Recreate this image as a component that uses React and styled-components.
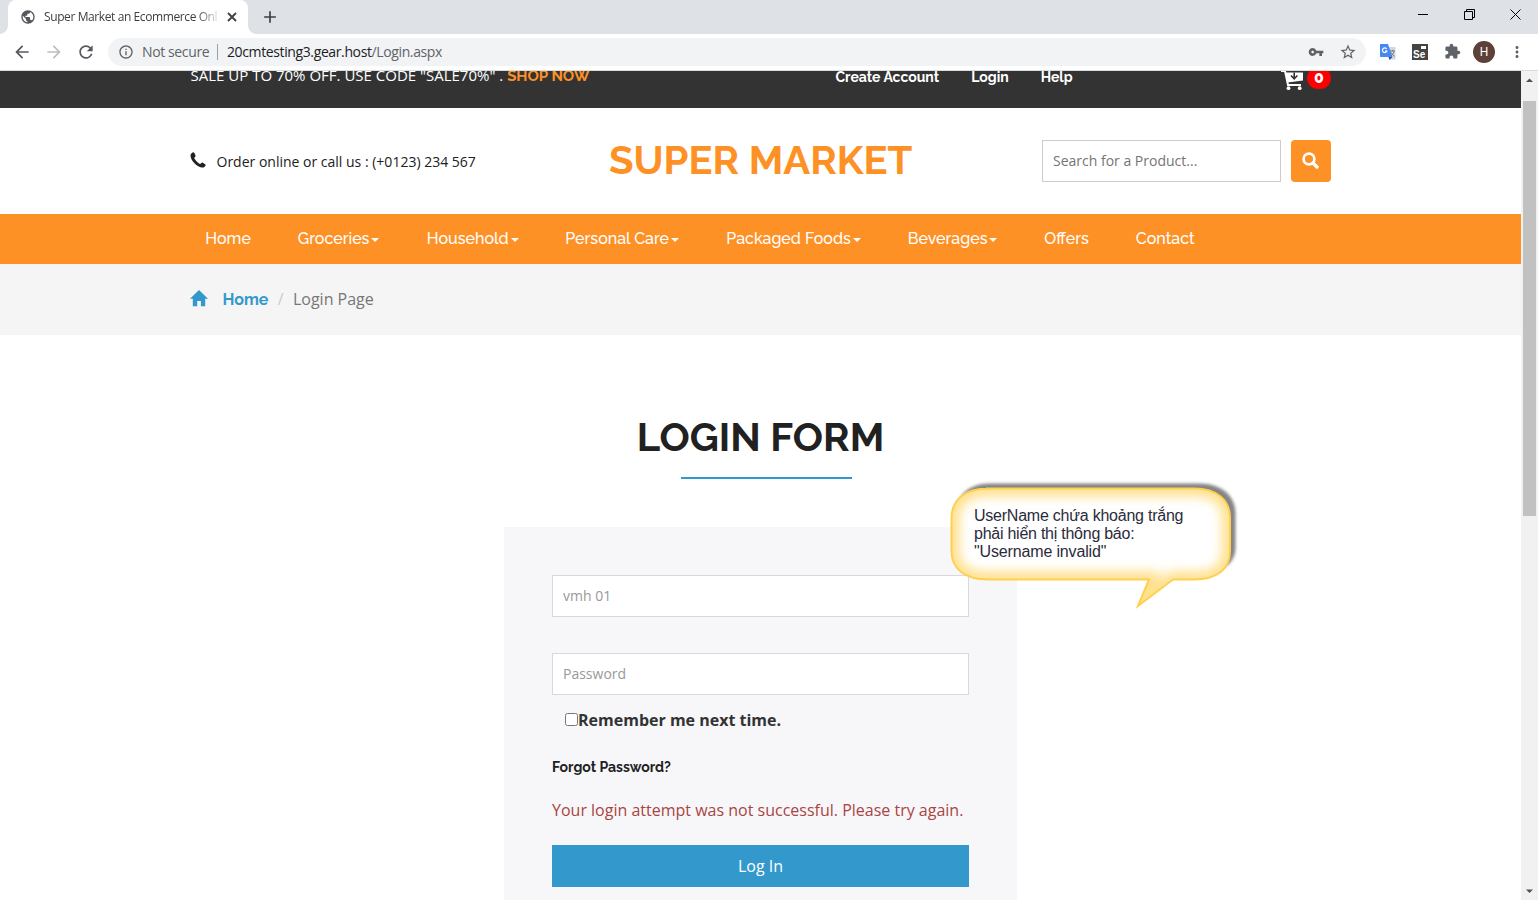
import React from "react";
import styled, { createGlobalStyle, css } from "styled-components";
import {
  MdArrowBack,
  MdArrowForward,
  MdExtension,
  MdInfoOutline,
  MdMoreVert,
  MdRefresh,
  MdStarBorder,
  MdVpnKey,
  MdPublic,
  MdAdd,
} from "react-icons/md";

const raleway = `Raleway, Lato, sans-serif`;
const openSans = `"Open Sans", "Noto Sans", sans-serif`;

const GlobalStyle = createGlobalStyle`
  *, *::before, *::after { box-sizing: border-box; }
  body { margin: 0; overflow: hidden; background: #fff; font-family: ${openSans}; }
  svg { display: block; flex: none; }
  a { text-decoration: none; color: inherit; }
`;

/* ---------- browser window ---------- */

const BrowserWindow = styled.div`
  position: relative;
  display: flex;
  flex-direction: column;
  width: 1538px;
  height: 900px;
  overflow: hidden;
`;

const TabStrip = styled.div`
  display: flex;
  flex: none;
  height: 34px;
  padding-left: 8px;
  background: #dee1e6;
`;

const Tab = styled.div`
  position: relative;
  display: flex;
  align-items: center;
  width: 240px;
  padding: 0 9px 0 12px;
  border-radius: 8px 8px 0 0;
  background: #fff;
  color: #3c4043;

  &::before, &::after {
    content: "";
    position: absolute;
    bottom: 0;
    width: 8px;
    height: 8px;
  }
  &::before { left: -8px; background: radial-gradient(circle at 0 0, transparent 7.5px, #fff 8px); }
  &::after { right: -8px; background: radial-gradient(circle at 100% 0, transparent 7.5px, #fff 8px); }
`;

const TabTitle = styled.span`
  width: 174px;
  margin: 0 7px 0 8px;
  overflow: hidden;
  white-space: nowrap;
  font: 400 12px/16px ${openSans};
  letter-spacing: -0.4px;
  mask-image: linear-gradient(to right, #000 152px, transparent 178px);
`;

const NewTab = styled.div`
  display: flex;
  align-items: center;
  margin-left: 12px;
  color: #3c4043;
`;

const WindowControls = styled.div`
  display: flex;
  gap: 35px;
  margin: 9px 17px 0 auto;
`;

const Toolbar = styled.div`
  display: flex;
  flex: none;
  align-items: center;
  height: 37px;
  padding: 0 12px 1px;
  border-bottom: 1px solid #d9dcdf;
  background: #fff;
  color: #5f6368;
`;

const NavButtons = styled.div`
  display: flex;
  gap: 12px;
  width: 96px;
  color: #54585d;
  & > :nth-child(2) { color: #bcbec1; }
`;

const AddressBar = styled.div`
  display: flex;
  align-items: center;
  width: 1258px;
  height: 28px;
  padding: 0 9px 0 10px;
  border-radius: 14px;
  background: #f1f3f4;
  font: 400 14px/20px ${openSans};
  letter-spacing: -0.38px;
  white-space: nowrap;
`;

const SecurityLabel = styled.span`
  width: 76px;
  margin-left: 8px;
  border-right: 1px solid #9aa0a6;
  line-height: 16px;
`;

const Url = styled.span`
  flex: 1;
  margin-left: 9px;
  color: #5f6368;
  b { font-weight: 400; color: #202124; }
`;

const AddressActions = styled.div`
  display: flex;
  gap: 15px;
  align-items: center;
`;

const Extensions = styled.div`
  display: flex;
  align-items: center;
  margin-left: 14px;
  gap: 16px;
`;

const Avatar = styled.div`
  width: 22px;
  height: 22px;
  margin-left: -4px;
  border-radius: 50%;
  background: #5d4037;
  color: #fff;
  text-align: center;
  font: 400 12px/22px Roboto, sans-serif;
`;

const MenuSlot = styled.div`
  margin-left: -3px;
`;

/* ---------- viewport ---------- */

const Viewport = styled.div`
  display: flex;
  flex: 1;
  min-height: 0;
`;

const Page = styled.main`
  display: flex;
  flex-direction: column;
  width: 1521px;
  overflow: hidden;
  color: #212121;
`;

const Scrollbar = styled.div`
  display: flex;
  flex-direction: column;
  align-items: center;
  width: 17px;
  padding: 7px 0 6px;
  background: #f1f1f1;
`;

const ScrollThumb = styled.div`
  width: 13px;
  height: 415px;
  margin: 18px 0 auto;
  background: #c1c1c1;
`;

const container = css`
  width: 1141px;
  margin: 0 auto;
`;

/* ---------- site header ---------- */

const TopBar = styled.div`
  flex: none;
  height: 37px;
  background: #333;
  color: #fff;
`;

const TopBarInner = styled.div`
  ${container}
  display: flex;
  height: 30px;
  margin-top: -11px;
  padding-left: 0.5px;
  align-items: center;
  white-space: nowrap;
`;

const Offer = styled.p`
  width: 645px;
  margin: 0;
  font: 400 15px/20px ${openSans};
  a { font: 700 15px/20px ${raleway}; color: #fe9126; }
`;

const TopLink = styled.a`
  margin: 4px 32px 0 0;
  font: 700 14px/20px ${raleway};
`;

const Cart = styled.div`
  display: flex;
  align-items: center;
  gap: 3px;
  margin-left: auto;
  padding-top: 9px;
`;

const CartCount = styled.span`
  width: 24px;
  height: 22px;
  margin-top: -3px;
  border-radius: 11px;
  background: #f00;
  text-align: center;
  font: 800 16px/21px ${raleway};
`;

const Header = styled.header`
  ${container}
  display: grid;
  flex: none;
  grid-template-columns: 419px 433px 289px;
  align-items: center;
  height: 106px;
`;

const Phone = styled.div`
  display: flex;
  align-items: center;
  gap: 10.5px;
  padding-top: 2px;
  font: 400 14px/20px ${openSans};
  white-space: nowrap;
  svg { margin-top: -5px; }
`;

const Brand = styled.h1`
  margin: -2px 0 0;
  color: #fe9126;
  font: 700 40px/48px ${raleway};
  white-space: nowrap;
`;

const Search = styled.form`
  display: flex;
  gap: 10px;
`;

const TextField = styled.input`
  display: block;
  width: 100%;
  height: 42px;
  padding: 0 10px 2px;
  border: 1px solid ${(p) => p.$border || "#d9d9dc"};
  border-radius: 0;
  outline: none;
  background: #fff;
  color: #999;
  font: 400 14px/20px ${openSans};
  &::placeholder { color: ${(p) => p.$hint || "#999"}; opacity: 1; }
`;

const SearchButton = styled.button`
  display: flex;
  flex: none;
  align-items: center;
  justify-content: center;
  width: 40px;
  height: 42px;
  padding: 0 1px 1px 0;
  border: 0;
  border-radius: 4px;
  background: #fe9126;
  color: #fff;
`;

/* ---------- navigation ---------- */

const NavBar = styled.nav`
  flex: none;
  background: #fe9126;
`;

const NavList = styled.div`
  ${container}
  display: grid;
  grid-template-columns: 92.5px 129px 138.5px 161px 181.5px 136.5px 91.5px auto;
  align-items: center;
  height: 50px;
  padding-left: 15.3px;
`;

const NavItem = styled.a`
  display: flex;
  align-items: center;
  color: #fff;
  font: 500 16px/24px ${raleway};
  white-space: nowrap;
`;

const Caret = styled.i`
  margin: 2px 0 0 2px;
  border: solid transparent;
  border-width: 4px 4px 0;
  border-top-color: #fff;
`;

const Breadcrumb = styled.div`
  flex: none;
  background: #f5f5f5;
`;

const BreadcrumbInner = styled.div`
  ${container}
  display: flex;
  align-items: center;
  height: 71px;
  padding-bottom: 2px;
  font: 400 16px/24px ${openSans};
  color: #777;
  svg { margin-right: 14.5px; margin-top: -1px; }
  a { font: 700 16px/24px ${raleway}; color: #3399cc; margin-top: 3px; }
  i { margin: 0 9.3px; color: #ccc; font-style: normal; }
`;

/* ---------- login ---------- */

const LoginSection = styled.section`
  display: flex;
  flex-direction: column;
  align-items: center;
  padding-top: 78px;
`;

const Heading = styled.h2`
  margin: 0;
  color: #212121;
  font: 700 40px/48px ${raleway};
`;

const HeadingRule = styled.div`
  width: 171px;
  height: 2px;
  margin: 16px 0 48px 12px;
  background: #3399cc;
`;

const LoginPanel = styled.form`
  display: flex;
  flex-direction: column;
  width: 513px;
  height: 373px;
  padding: 48px 48px 0;
  background: #f7f7f9;
`;

const PasswordRow = styled.div`
  margin-top: 36px;
`;

const Remember = styled.label`
  display: flex;
  align-items: center;
  height: 24px;
  margin: 13px 0 0 13px;
  color: #333;
  font: 700 16px/24px ${openSans};
  input { width: 13px; height: 13px; margin: 0 0 2px; }
`;

const Forgot = styled.a`
  margin-top: 23px;
  color: #212121;
  font: 700 14px/24px ${raleway};
`;

const ErrorText = styled.p`
  margin: 19px 0 0;
  color: #a94442;
  font: 400 16px/24px ${openSans};
  white-space: nowrap;
`;

const LoginButton = styled.button`
  height: 42px;
  margin-top: 23px;
  padding: 0;
  border: 0;
  background: #3399cc;
  color: #fff;
  font: 400 16px/24px ${openSans};
`;

/* ---------- annotation ---------- */

const Callout = styled.div`
  position: absolute;
  left: 940px;
  top: 474px;
  width: 304px;
  height: 140px;
  padding: 33px 0 0 34px;
  svg { position: absolute; left: 0; top: 0; }
`;

const CalloutLine = styled.div`
  position: relative;
  color: #2b2b3a;
  font: 400 16px/18px "Liberation Sans", sans-serif;
  letter-spacing: ${(p) => p.$spacing}px;
  white-space: nowrap;
`;

const bubble =
  "M46 14.500H254C277 14.500 290 26 290 44V77C290 95 277 105.500 254 105.500H233L198 132L209 105.500H48C25 105.500 11.500 95 11.500 77V44C11.500 26 25 14.500 48 14.500Z";

const CalloutShape = () => (
  <svg width="304" height="140" viewBox="0 0 304 140">
    <defs>
      <clipPath id="bubbleClip"><path d={bubble} /></clipPath>
      <filter id="bubbleShadow"><feGaussianBlur stdDeviation="1.4" /></filter>
      <filter id="bubbleGlow"><feGaussianBlur stdDeviation="5.5" /></filter>
    </defs>
    <path d="M50 9.500H259C282 9.500 295.500 22 295.500 40V73C295.500 90 283 98 259 98H50C26 98 16 90 16 71V42C16 22 28 9.500 50 9.500Z" fill="#858585" filter="url(#bubbleShadow)" />
    <path d={bubble} fill="#fff" />
    <g clipPath="url(#bubbleClip)">
      <path d={bubble} fill="none" stroke="#ffe08c" strokeWidth="16" filter="url(#bubbleGlow)" />
    </g>
    <path d={bubble} fill="none" stroke="#ffd04f" strokeWidth="2" />
  </svg>
);

/* ---------- icons ---------- */

const TabCloseIcon = () => (
  <svg width="14" height="14" viewBox="0 0 14 14">
    <path d="M3 3L11 11M11 3L3 11" stroke="#3c4043" strokeWidth="1.800" />
  </svg>
);
const MinimizeIcon = () => (
  <svg width="11" height="11"><path d="M0 5.500H10" stroke="#000" /></svg>
);
const RestoreIcon = () => (
  <svg width="11" height="11" fill="none" stroke="#000">
    <path d="M.5 2.500H8.500V10.500H.5ZM2.500 2.500V.5H10.500V8.500H8.500" />
  </svg>
);
const CloseIcon = () => (
  <svg width="11" height="11"><path d="M.5.5L10.500 10.500M10.500.5L.5 10.500" stroke="#000" /></svg>
);
const TranslateIcon = () => (
  <svg width="16" height="16">
    <path d="M6 3H15.500V15.500H10Z" fill="#d5d7da" />
    <path d="M0 0H8L12.500 13H1C.4 13 0 12.600 0 12Z" fill="#4688f1" />
    <path d="M8.500 13H12.500L9.500 16Z" fill="#3447b5" />
    <path d="M6.700 5A2.300 2.300 0 1 0 6.900 7H5" fill="none" stroke="#fff" strokeWidth="1.200" />
    <path d="M10 7H15M12.600 5.800V7M14 7.200C13.500 9.500 12.500 11 11 12M11.200 8.500C12 10 13 11.500 14.700 12.300" fill="none" stroke="#6b7f8e" />
  </svg>
);
const SeleniumBox = styled.div`
  width: 16px;
  height: 16px;
  padding: 6px 0 0 1px;
  background: #444 linear-gradient(#fff, #fff) 9px 2px / 5px 3px no-repeat;
  color: #fff;
  font: 700 10px/10px "Liberation Sans", sans-serif;
`;
const CartIcon = () => (
  <svg width="23" height="22" viewBox="0 0 23 22">
    <path d="M0 2H4L7 16H20" fill="none" stroke="#fff" strokeWidth="2" />
    <path d="M4 3.500H22V11.500L6.500 13.500Z" fill="#fff" />
    <path d="M13.200 3.500V10M10 6.500L13.200 9.800L16.400 6.500" fill="none" stroke="#333" strokeWidth="1.600" />
    <path d="M6.500 16H20" stroke="#fff" strokeWidth="2" />
    <circle cx="7.500" cy="19.200" r="1.900" fill="#fff" />
    <circle cx="18.700" cy="19.200" r="1.900" fill="#fff" />
  </svg>
);
const PhoneIcon = () => (
  <svg width="16" height="16" viewBox="0 0 16 16">
    <path d="M3.600.3C2.400.3.500 1.600.500 3.600C.500 8.500 7.200 15.600 12.300 15.600C14.200 15.600 15.600 13.900 15.700 12.900C15.700 12.500 12.700 10.500 12.100 10.500C11.500 10.500 10.700 12 10.100 12C9 12 4.300 7.400 4.300 6.100C4.300 5.500 5.600 4.800 5.600 4.100C5.600 3.500 4.300.3 3.600.3Z" fill="#212121" />
  </svg>
);
const SearchIcon = () => (
  <svg width="17" height="17" viewBox="0 0 17 17" fill="none" stroke="#fff">
    <circle cx="7" cy="7" r="5.400" strokeWidth="2.700" />
    <path d="M11 11L15 15" strokeWidth="3.400" strokeLinecap="round" />
  </svg>
);
const HomeIcon = () => (
  <svg width="18" height="17" viewBox="0 0 18 17">
    <path d="M9 0L18 8.700H15.200V16.300H10.900V10.900H7.200V16.300H2.800V8.700H0Z" fill="#3399cc" />
  </svg>
);
const ArrowIcon = ({ down }) => (
  <svg width="7" height="5"><path d={down ? "M0 .5H7L3.500 4Z" : "M0 4H7L3.500.5Z"} fill="#505050" /></svg>
);

const navItems = [
  { label: "Home" },
  { label: "Groceries", menu: true },
  { label: "Household", menu: true },
  { label: "Personal Care", menu: true },
  { label: "Packaged Foods", menu: true },
  { label: "Beverages", menu: true },
  { label: "Offers" },
  { label: "Contact" },
];

export default function App() {
  return (
    <BrowserWindow>
      <GlobalStyle />
      <TabStrip>
        <Tab>
          <MdPublic size={16} color="#54585d" />
          <TabTitle>Super Market an Ecommerce Onl</TabTitle>
          <TabCloseIcon />
        </Tab>
        <NewTab><MdAdd size={20} /></NewTab>
        <WindowControls>
          <MinimizeIcon />
          <RestoreIcon />
          <CloseIcon />
        </WindowControls>
      </TabStrip>

      <Toolbar>
        <NavButtons>
          <MdArrowBack size={20} />
          <MdArrowForward size={20} />
          <MdRefresh size={20} />
        </NavButtons>
        <AddressBar>
          <MdInfoOutline size={16} />
          <SecurityLabel>Not secure</SecurityLabel>
          <Url><b>20cmtesting3.gear.host</b>/Login.aspx</Url>
          <AddressActions>
            <MdVpnKey size={16} />
            <MdStarBorder size={18} />
          </AddressActions>
        </AddressBar>
        <Extensions>
          <TranslateIcon />
          <SeleniumBox>Se</SeleniumBox>
          <MdExtension size={17} />
          <Avatar>H</Avatar>
          <MenuSlot><MdMoreVert size={18} /></MenuSlot>
        </Extensions>
      </Toolbar>

      <Viewport>
        <Page>
          <TopBar>
            <TopBarInner>
              <Offer>SALE UP TO 70% OFF. USE CODE "SALE70%" . <a href="#shop">SHOP NOW</a></Offer>
              <TopLink href="#create">Create Account</TopLink>
              <TopLink href="#login">Login</TopLink>
              <TopLink href="#help">Help</TopLink>
              <Cart>
                <CartIcon />
                <CartCount>0</CartCount>
              </Cart>
            </TopBarInner>
          </TopBar>

          <Header>
            <Phone><PhoneIcon />Order online or call us : (+0123) 234 567</Phone>
            <Brand>SUPER MARKET</Brand>
            <Search>
              <TextField placeholder="Search for a Product..." $border="#ccc" $hint="#757575" />
              <SearchButton type="button"><SearchIcon /></SearchButton>
            </Search>
          </Header>

          <NavBar>
            <NavList>
              {navItems.map((item) => (
                <NavItem key={item.label} href="#nav">
                  {item.label}
                  {item.menu && <Caret />}
                </NavItem>
              ))}
            </NavList>
          </NavBar>

          <Breadcrumb>
            <BreadcrumbInner>
              <HomeIcon />
              <a href="#home">Home</a>
              <i>/</i>
              <span>Login Page</span>
            </BreadcrumbInner>
          </Breadcrumb>

          <LoginSection>
            <Heading>LOGIN FORM</Heading>
            <HeadingRule />
            <LoginPanel>
              <TextField defaultValue="vmh 01" />
              <PasswordRow><TextField type="password" placeholder="Password" /></PasswordRow>
              <Remember><input type="checkbox" />Remember me next time.</Remember>
              <Forgot href="#forgot">Forgot Password?</Forgot>
              <ErrorText>Your login attempt was not successful. Please try again.</ErrorText>
              <LoginButton type="button">Log In</LoginButton>
            </LoginPanel>
          </LoginSection>
        </Page>
        <Scrollbar>
          <ArrowIcon />
          <ScrollThumb />
          <ArrowIcon down />
        </Scrollbar>
      </Viewport>

      <Callout>
        <CalloutShape />
        <CalloutLine $spacing={-0.23}>UserName chứa khoảng trắng</CalloutLine>
        <CalloutLine $spacing={-0.25}>phải hiển thị thông báo:</CalloutLine>
        <CalloutLine $spacing={-0.15}>"Username invalid"</CalloutLine>
      </Callout>
    </BrowserWindow>
  );
}
